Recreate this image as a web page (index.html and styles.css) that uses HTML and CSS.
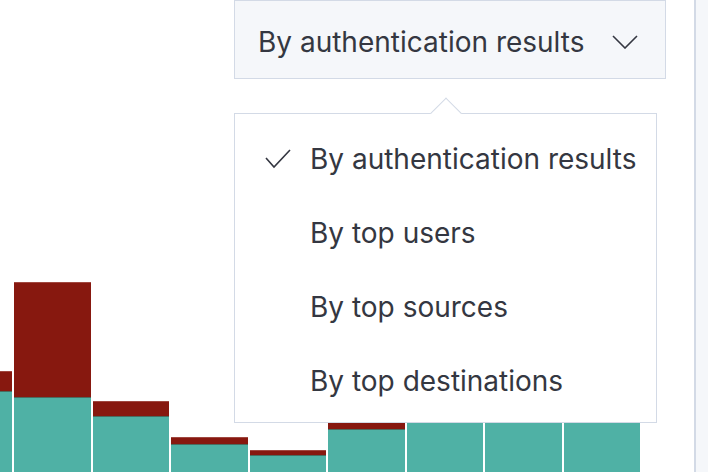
FILE: index.html
```html
<!DOCTYPE html>
<html lang="en">
<head>
<meta charset="utf-8">
<title>Authentication chart</title>
<link rel="stylesheet" href="styles.css">
</head>
<body>
<div class="page">
  <main class="main">
    <div class="toolbar">
      <button class="select" type="button">
        <span class="select-label">By authentication results</span>
        <svg class="chevron" width="26" height="14" viewBox="0 0 26 14"><polyline points="1,1 13,13 25,1" fill="none" stroke="#343741" stroke-width="1.6"/></svg>
      </button>
    </div>
    <div class="chart">
      <div class="bar"><div class="seg fail" style="height:20px"></div><div class="seg ok" style="height:81px"></div></div>
      <div class="bar"><div class="seg fail" style="height:115px"></div><div class="seg ok" style="height:75px"></div></div>
      <div class="bar"><div class="seg fail" style="height:15px"></div><div class="seg ok" style="height:56px"></div></div>
      <div class="bar"><div class="seg fail" style="height:7px"></div><div class="seg ok" style="height:28px"></div></div>
      <div class="bar"><div class="seg fail" style="height:5px"></div><div class="seg ok" style="height:17px"></div></div>
      <div class="bar"><div class="seg fail" style="height:12px"></div><div class="seg ok" style="height:43px"></div></div>
      <div class="bar"><div class="seg fail" style="height:6px"></div><div class="seg ok" style="height:60px"></div></div>
      <div class="bar"><div class="seg fail" style="height:6px"></div><div class="seg ok" style="height:62px"></div></div>
      <div class="bar"><div class="seg fail" style="height:6px"></div><div class="seg ok" style="height:58px"></div></div>
    </div>
    <div class="popover">
      <span class="arrow"></span>
      <ul class="menu">
        <li class="item selected">
          <svg class="check" width="26" height="20" viewBox="0 0 26 20"><polyline points="1,9 9,18 25,1" fill="none" stroke="#343741" stroke-width="1.6"/></svg>
          <span>By authentication results</span>
        </li>
        <li class="item"><span class="spacer"></span><span>By top users</span></li>
        <li class="item"><span class="spacer"></span><span>By top sources</span></li>
        <li class="item"><span class="spacer"></span><span>By top destinations</span></li>
      </ul>
    </div>
  </main>
  <aside class="side"></aside>
</div>
</body>
</html>
```
FILE: styles.css
```css
html, body {
  margin: 0;
  padding: 0;
  background: #ffffff;
}

body {
  font-family: Inter, "Noto Sans", sans-serif;
  color: #343741;
}

.page {
  display: flex;
  width: 708px;
  height: 472px;
  overflow: hidden;
}

.main {
  position: relative;
  width: 694px;
  flex: none;
  display: flex;
  flex-direction: column;
}

.side {
  flex: 1;
  background: #f5f7fa;
  border-left: 2px solid #d3dae6;
}

.toolbar {
  display: flex;
  justify-content: flex-end;
  padding-right: 28px;
}

.select {
  box-sizing: border-box;
  width: 432px;
  height: 79px;
  display: flex;
  align-items: center;
  justify-content: space-between;
  padding: 4px 27px 0 23px;
  background: #f5f7fa;
  border: 1px solid #d3dae6;
  font-family: inherit;
  font-size: 28px;
  color: #343741;
}

.chevron {
  display: block;
}

.chart {
  flex: 1;
  display: flex;
  align-items: flex-end;
  gap: 2px;
  width: 704px;
  margin-left: -64px;
}

.bar {
  flex: 1;
  display: flex;
  flex-direction: column;
}

.seg.fail {
  background: #87180f;
  box-sizing: border-box;
  border-top: 1px solid #a04840;
}

.seg.ok {
  background: #4fb1a5;
  box-sizing: border-box;
  border-top: 1px solid #4a6c60;
}

.popover {
  position: absolute;
  left: 234px;
  top: 113px;
  width: 423px;
  height: 310px;
  box-sizing: border-box;
  background: #ffffff;
  border: 1px solid #d3dae6;
  padding: 8px 0 4px;
}

.arrow {
  position: absolute;
  left: 200px;
  top: -12px;
  width: 21px;
  height: 21px;
  background: #ffffff;
  border-top: 1px solid #d3dae6;
  border-left: 1px solid #d3dae6;
  transform: rotate(45deg);
}

.menu {
  position: relative;
  list-style: none;
  margin: 0;
  padding: 0;
}

.item {
  display: flex;
  align-items: center;
  height: 74px;
  padding-left: 30px;
  font-size: 28px;
  line-height: 74px;
}

.check,
.spacer {
  display: block;
  width: 26px;
  height: 20px;
  margin-right: 19px;
  flex: none;
}
```
